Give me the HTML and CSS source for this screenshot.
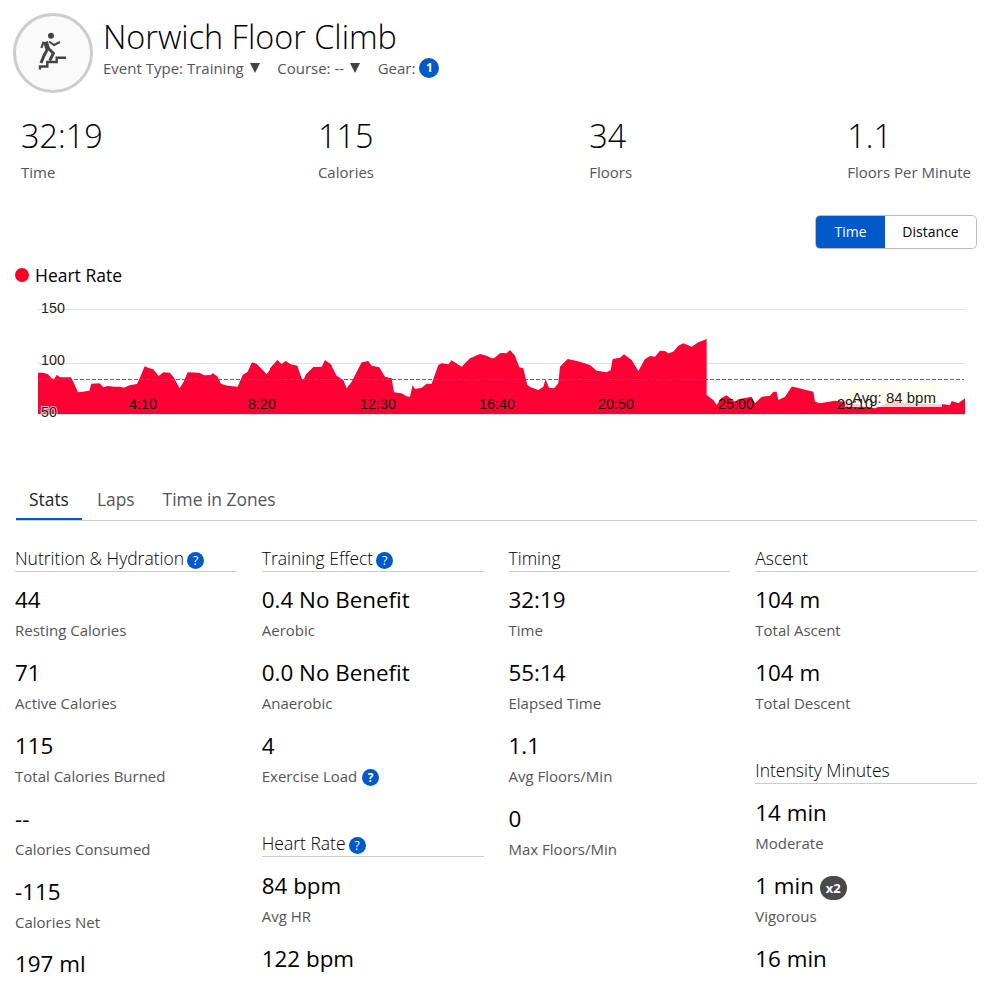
FILE: index.html
```html
<!DOCTYPE html>
<html lang="en">
<head>
    <meta charset="UTF-8">
    <meta name="viewport" content="width=device-width, initial-scale=1.0">
    <title>Norwich Floor Climb</title>
    <link rel="stylesheet" href="styles.css">
</head>
<body>
    <div class="page-header">
        <div class="activity-icon">
            <svg width="74" height="74" viewBox="3 3 74 74" fill="none" stroke="#444">
                <circle cx="38" cy="22.7" r="3" fill="#444" stroke="none"/>
                <path d="M32.5 28.7L35.3 37.7" stroke-width="4.6"/>
                <path d="M36 28.5L41 32L47 29" stroke-width="2"/>
                <path d="M30.6 28.7L28.4 35" stroke-width="2.2"/>
                <path d="M36.3 36.3L40.3 40.3L36.8 47.7" stroke-width="3"/>
                <path d="M33.7 37.7L31.3 42L28 50" stroke-width="3"/>
                <path d="M27 56.5V53.5H34.3V49H43.7V44.7H53" stroke-width="2.4"/>
            </svg>
        </div>
        <div class="header-text">
            <h1 class="title">Norwich Floor Climb</h1>
            <div class="meta">
                <span class="meta-item">Event Type: Training <i class="caret"></i></span>
                <span class="meta-item">Course: -- <i class="caret"></i></span>
                <span class="meta-item">Gear: <b class="count">1</b></span>
            </div>
        </div>
    </div>

    <div class="summary">
        <div class="summary-item"><div class="summary-value">32:19</div><div class="summary-label">Time</div></div>
        <div class="summary-item"><div class="summary-value">115</div><div class="summary-label">Calories</div></div>
        <div class="summary-item"><div class="summary-value">34</div><div class="summary-label">Floors</div></div>
        <div class="summary-item"><div class="summary-value">1.1</div><div class="summary-label">Floors Per Minute</div></div>
    </div>

    <div class="toggle-row">
        <div class="toggle">
            <span class="toggle-btn active">Time</span>
            <span class="toggle-btn">Distance</span>
        </div>
    </div>

    <div class="legend"><i class="legend-dot"></i>Heart Rate</div>

    <svg class="chart" width="986" height="130" viewBox="0 295 986 130">
        <line class="grid" x1="38" y1="309.5" x2="965" y2="309.5"/>
        <line class="grid" x1="38" y1="363.5" x2="965" y2="363.5"/>
        <line class="grid" x1="38" y1="414.5" x2="965" y2="414.5"/>
        <!-- traced in 3x crop coordinates, one polygon per stretch -->
        <g class="area">
            <polygon transform="translate(36 335) scale(.33333)" points="6,237 6,113 22,113 36,118 47,130 55,132 62,119 72,127 105,127 112,140 126,172 140,170 160,167 166,146 190,145 203,157 215,153 235,155 250,155 265,158 280,151 303,147 313,125 326,94 340,100 352,103 368,123 382,112 402,113 413,127 431,160 443,140 455,112 490,113 505,121 525,120 530,114 545,125 555,146 575,152 605,155 620,120 635,110 648,82 662,86 680,105 692,118 705,100 705,237"/>
            <polygon transform="translate(270 335) scale(.33333)" points="0,237 0,100 22,75 35,87 47,78 62,88 82,92 95,130 100,136 108,118 130,96 155,95 165,75 182,87 200,122 220,135 230,160 245,140 258,115 275,82 295,78 305,92 328,97 345,125 365,130 372,172 395,175 410,184 420,185 428,150 435,162 455,158 470,146 485,146 505,90 515,85 535,88 545,76 575,95 600,70 630,57 650,62 665,70 672,70 690,55 705,54 705,237"/>
            <polygon transform="translate(500 335) scale(.33333)" points="0,237 0,55 20,55 30,45 45,62 58,97 70,100 82,150 92,157 115,165 130,155 137,133 147,158 162,160 175,145 180,95 203,72 240,80 270,90 290,107 320,112 332,105 338,72 360,68 372,58 395,75 415,108 435,72 450,63 465,65 480,47 495,48 505,55 520,50 535,32 550,25 575,35 595,22 620,12 620,180 640,195 650,210 665,188 680,181 705,200 705,237"/>
            <polygon transform="translate(735 335) scale(.33333)" points="0,237 0,200 10,193 50,185 60,205 80,185 105,182 115,170 125,170 130,195 150,185 170,155 175,155 235,170 240,200 255,205 300,197 330,200 360,205 380,212 420,220 450,208 480,195 510,205 560,205 600,208 625,208 645,210 650,198 670,205 690,190 690,237"/>
        </g>
        <line class="avg-line" x1="38" y1="379.5" x2="964" y2="379.5"/>
        <rect class="avg-box" x="845" y="383" width="97" height="24"/>
        <text class="axis" x="41" y="313">150</text>
        <text class="axis" x="41" y="365">100</text>
        <text class="axis axis-low" x="41" y="417">50</text>
        <text class="axis tick" x="143" y="409">4:10</text>
        <text class="axis tick" x="262" y="409">8:20</text>
        <text class="axis tick" x="378" y="409">12:30</text>
        <text class="axis tick" x="497" y="409">16:40</text>
        <text class="axis tick" x="616" y="409">20:50</text>
        <text class="axis tick" x="736" y="409">25:00</text>
        <text class="axis tick" x="855" y="409">29:10</text>
        <text class="axis avg-text" x="852" y="403">Avg: 84 bpm</text>
    </svg>

    <div class="tabs">
        <span class="tab active">Stats</span>
        <span class="tab">Laps</span>
        <span class="tab">Time in Zones</span>
    </div>

    <div class="stats">
        <div class="stats-col">
            <div class="section-title">Nutrition &amp; Hydration <b class="help">?</b></div>
            <div class="stat"><div class="stat-value">44</div><div class="stat-label">Resting Calories</div></div>
            <div class="stat"><div class="stat-value">71</div><div class="stat-label">Active Calories</div></div>
            <div class="stat"><div class="stat-value">115</div><div class="stat-label">Total Calories Burned</div></div>
            <div class="stat"><div class="stat-value">--</div><div class="stat-label">Calories Consumed</div></div>
            <div class="stat"><div class="stat-value">-115</div><div class="stat-label">Calories Net</div></div>
            <div class="stat"><div class="stat-value">197 ml</div></div>
        </div>
        <div class="stats-col">
            <div class="section-title">Training Effect <b class="help">?</b></div>
            <div class="stat"><div class="stat-value">0.4 No Benefit</div><div class="stat-label">Aerobic</div></div>
            <div class="stat"><div class="stat-value">0.0 No Benefit</div><div class="stat-label">Anaerobic</div></div>
            <div class="stat"><div class="stat-value">4</div><div class="stat-label">Exercise Load <b class="help">?</b></div></div>
            <div class="section-title section-next">Heart Rate <b class="help">?</b></div>
            <div class="stat"><div class="stat-value">84 bpm</div><div class="stat-label">Avg HR</div></div>
            <div class="stat"><div class="stat-value">122 bpm</div></div>
        </div>
        <div class="stats-col">
            <div class="section-title">Timing</div>
            <div class="stat"><div class="stat-value">32:19</div><div class="stat-label">Time</div></div>
            <div class="stat"><div class="stat-value">55:14</div><div class="stat-label">Elapsed Time</div></div>
            <div class="stat"><div class="stat-value">1.1</div><div class="stat-label">Avg Floors/Min</div></div>
            <div class="stat"><div class="stat-value">0</div><div class="stat-label">Max Floors/Min</div></div>
        </div>
        <div class="stats-col">
            <div class="section-title">Ascent</div>
            <div class="stat"><div class="stat-value">104 m</div><div class="stat-label">Total Ascent</div></div>
            <div class="stat"><div class="stat-value">104 m</div><div class="stat-label">Total Descent</div></div>
            <div class="section-title section-next">Intensity Minutes</div>
            <div class="stat"><div class="stat-value">14 min</div><div class="stat-label">Moderate</div></div>
            <div class="stat"><div class="stat-value">1 min <b class="badge">x2</b></div><div class="stat-label">Vigorous</div></div>
            <div class="stat"><div class="stat-value">16 min</div></div>
        </div>
    </div>
</body>
</html>
```

FILE: styles.css
```css
html,
body {
    margin: 0;
    padding: 0;
}

body {
    font-family: "Open Sans", Arial, sans-serif;
    background-color: #ffffff;
    color: #000000;
    height: 999px;
    overflow: hidden;
}

.page-header {
    display: flex;
    gap: 10px;
    padding: 13px 0 0 13px;
}

.activity-icon {
    width: 74px;
    height: 74px;
    border: 3px solid #cccccc;
    border-radius: 50%;
    background-color: #fafafa;
}

.activity-icon svg {
    display: block;
}

.header-text {
    padding-top: 2px;
}

.title {
    font-size: 32.4px;
    font-weight: 300;
    line-height: 42px;
    margin: 0;
}

.meta {
    display: flex;
    gap: 17.5px;
    font-size: 15px;
    line-height: 22px;
    color: #555555;
}

.meta-item {
    display: flex;
    align-items: center;
    gap: 4px;
}

.caret {
    width: 0;
    height: 0;
    margin-left: 2px;
    border-left: 5.5px solid transparent;
    border-right: 5.5px solid transparent;
    border-top: 10px solid #444444;
}

.count {
    width: 20px;
    height: 20px;
    border-radius: 50%;
    background-color: #0058c9;
    color: #ffffff;
    font-size: 12px;
    line-height: 20px;
    text-align: center;
}

.summary {
    display: flex;
    justify-content: space-between;
    padding: 20px 15px 0 21px;
}

.summary-value {
    font-size: 32.4px;
    font-weight: 300;
    line-height: 44px;
}

.summary-label {
    font-size: 15px;
    line-height: 20px;
    margin-top: 5px;
    color: #555555;
}

.toggle-row {
    display: flex;
    justify-content: flex-end;
    padding: 33px 9px 0 0;
}

.toggle {
    display: flex;
    width: 160px;
    height: 32px;
    border: 1px solid #bbbbbb;
    border-radius: 5px;
    overflow: hidden;
}

.toggle-btn {
    flex: 1;
    font-size: 14px;
    line-height: 32px;
    text-align: center;
}

.toggle-btn.active {
    flex: 0 0 69px;
    background-color: #0058c9;
    color: #ffffff;
}

.legend {
    display: flex;
    align-items: center;
    gap: 6px;
    padding: 14px 0 0 15px;
    font-size: 17.5px;
    line-height: 24px;
}

.legend-dot {
    width: 14px;
    height: 14px;
    border-radius: 50%;
    background-color: #ff0022;
}

.chart {
    display: block;
    margin-top: 8px;
}

.grid {
    stroke: #e2e2e2;
    stroke-width: 1;
}

.area polygon {
    fill: #ff0035;
}

.avg-line {
    stroke: #666666;
    stroke-width: 1;
    stroke-dasharray: 4 2;
}

.avg-box {
    fill: #fffff0;
    opacity: 0.8;
}

.axis {
    font-family: "Liberation Sans", Arial, sans-serif;
    font-size: 14.3px;
    fill: #222222;
}

.tick {
    text-anchor: middle;
    fill: #111111;
}

.avg-text {
    font-size: 15px;
}

.axis-low {
    stroke: #ffffff;
    stroke-width: 2px;
    stroke-opacity: 0.7;
    paint-order: stroke;
}

.tabs {
    display: flex;
    gap: 2px;
    margin: 55px 9px 0 16px;
    border-bottom: 1px solid #cccccc;
}

.tab {
    padding: 0 13px;
    font-size: 17.4px;
    line-height: 38px;
    height: 40px;
    color: #555555;
}

.tab.active {
    color: #222222;
    border-bottom: 2px solid #0058c9;
    height: 38px;
    margin-bottom: -1px;
}

.stats {
    display: grid;
    grid-template-columns: repeat(4, 1fr);
    gap: 25px;
    padding: 25px 9px 0 15px;
}

.section-title {
    font-size: 17.5px;
    font-weight: 300;
    line-height: 24px;
    height: 25px;
    border-bottom: 1px solid #cccccc;
}

.section-next {
    margin-top: 28px;
}

.help {
    display: inline-block;
    width: 17px;
    height: 17px;
    margin-left: 1px;
    border-radius: 50%;
    background-color: #0058c9;
    color: #ffffff;
    font-size: 12px;
    line-height: 17px;
    text-align: center;
    vertical-align: 0;
}

.section-title .help {
    margin-left: -1.5px;
}

.stat {
    height: 72.9px;
}

.section-title + .stat {
    margin-top: 12px;
}

.section-next + .stat {
    margin-top: 13px;
}

.stat-value {
    font-size: 22.4px;
    line-height: 32px;
}

.stat-label {
    font-size: 15px;
    line-height: 20px;
    margin-top: 4px;
    color: #555555;
}

.badge {
    display: inline-block;
    width: 27px;
    height: 24px;
    border-radius: 12px;
    background-color: #4a4a4a;
    color: #ffffff;
    font-size: 13px;
    line-height: 24px;
    text-align: center;
    vertical-align: 1px;
}
```
